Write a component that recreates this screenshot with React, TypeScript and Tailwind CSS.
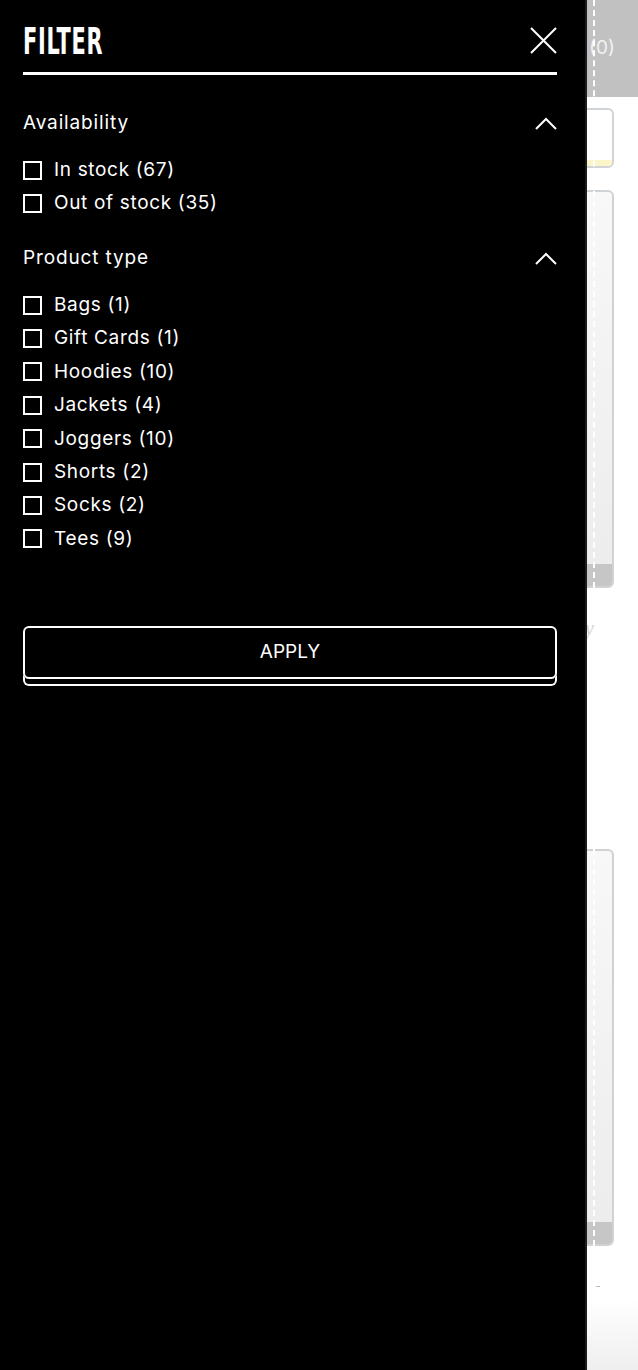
import React from 'react'

const availability = [
  { label: 'In stock', count: 67 },
  { label: 'Out of stock', count: 35 },
]

const productTypes = [
  { label: 'Bags', count: 1 },
  { label: 'Gift Cards', count: 1 },
  { label: 'Hoodies', count: 10 },
  { label: 'Jackets', count: 4 },
  { label: 'Joggers', count: 10 },
  { label: 'Shorts', count: 2 },
  { label: 'Socks', count: 2 },
  { label: 'Tees', count: 9 },
]

const Chevron = () => (
  <svg width="22" height="13" viewBox="0 0 22 13" fill="none" stroke="white" strokeWidth={2}>
    <path d="M1 12L11 2L21 12" />
  </svg>
)

const FilterGroup = ({
  title,
  items,
  rowClass,
}: {
  title: string
  items: { label: string; count: number }[]
  rowClass: string
}) => (
  <div>
    <div className="flex h-[30px] items-center justify-between">
      <span className="text-[19px] tracking-[0.045em]">{title}</span>
      <Chevron />
    </div>
    <ul className="mt-[15.5px]">
      {items.map((item) => (
        <li key={item.label} className={`flex items-center ${rowClass}`}>
          <span className="h-[19px] w-[19px] border-2 border-white" />
          <span className="ml-3 text-[19px] tracking-[0.035em]">
            {item.label} ({item.count})
          </span>
        </li>
      ))}
    </ul>
  </div>
)

// page behind the drawer, only a thin strip of it shows
const Backdrop = () => (
  <div className="flex h-full w-full bg-white">
    <div className="w-[560px] shrink-0" />
    <div className="relative flex w-[54px] shrink-0 flex-col">
      <div className="-mr-[24px] flex h-[97px] shrink-0 items-center bg-[#c1c1c1] pl-[29px] text-[19px] text-[#f2f2f2]">
        (0)
      </div>
      <div className="mt-[11px] h-[60px] shrink-0 overflow-hidden rounded-[6px] border-2 border-[#d0d4d6] bg-white">
        <div className="mt-[50px] h-[6px] bg-[#fbf6c9]" />
      </div>
      <div className="mt-[22px] flex h-[398px] shrink-0 flex-col overflow-hidden rounded-[6px] border-2 border-[#cfd3d5] bg-gradient-to-b from-[#f8f8f8] to-[#ececec]">
        <div className="flex-1" />
        <div className="h-[22px] bg-[#c6c6c6]" />
      </div>
      <div className="mt-[30px] shrink-0 pl-[25px] font-['Liberation_Serif',serif] text-[20px] italic leading-none text-[#d4d4d4]">
        y
      </div>
      <div className="mt-[211px] flex h-[397px] shrink-0 flex-col overflow-hidden rounded-[6px] border-2 border-[#cfd3d5] bg-gradient-to-b from-[#f8f8f8] to-[#ececec]">
        <div className="flex-1" />
        <div className="h-[22px] bg-[#c6c6c6]" />
      </div>
      <div className="ml-[36px] mt-[40px] h-[1px] w-[4px] shrink-0 bg-[#bbb]" />
      <div className="-mr-[24px] mt-[12px] h-[82px] shrink-0 bg-gradient-to-b from-white to-[#ececec]" />
      <div className="absolute left-[33px] top-0 h-[588px] border-l-2 border-dashed border-white" />
      <div className="absolute left-[33px] top-[849px] h-[397px] border-l-2 border-dashed border-white" />
    </div>
  </div>
)

export default function App() {
  return (
    <div className="relative h-[1370px] w-[638px] overflow-hidden font-['Inter','Liberation_Sans',sans-serif]">
      <Backdrop />
      <aside className="absolute inset-y-0 left-0 w-[587px] border-r-2 border-[#1c1c1e] bg-black pl-[23px] pr-[28px] text-white">
        <div className="flex h-[75px] items-start justify-between border-b-[3px] border-white">
          <h2 className="mt-[19px] origin-left scale-x-[0.61] font-['Liberation_Sans_Narrow','DejaVu_Sans_Condensed',sans-serif] text-[38px] font-semibold leading-[44px] tracking-[0.03em]">
            FILTER
          </h2>
          <svg className="mt-[27px]" width="27" height="27" viewBox="0 0 27 27" stroke="white" strokeWidth={2}>
            <path d="M1 1L26 26M26 1L1 26" />
          </svg>
        </div>

        <div className="mt-[33px]">
          <FilterGroup title="Availability" items={availability} rowClass="h-[33px]" />
        </div>
        <div className="mt-[23.5px]">
          <FilterGroup title="Product type" items={productTypes} rowClass="h-[33.4px]" />
        </div>

        <button className="mt-[70px] flex h-[53px] w-full items-center justify-center rounded-[6px] border-2 border-white text-[19px] shadow-[0_7px_0_-2px_#000,0_7px_0_0_#fff]">
          APPLY
        </button>
      </aside>
    </div>
  )
}
